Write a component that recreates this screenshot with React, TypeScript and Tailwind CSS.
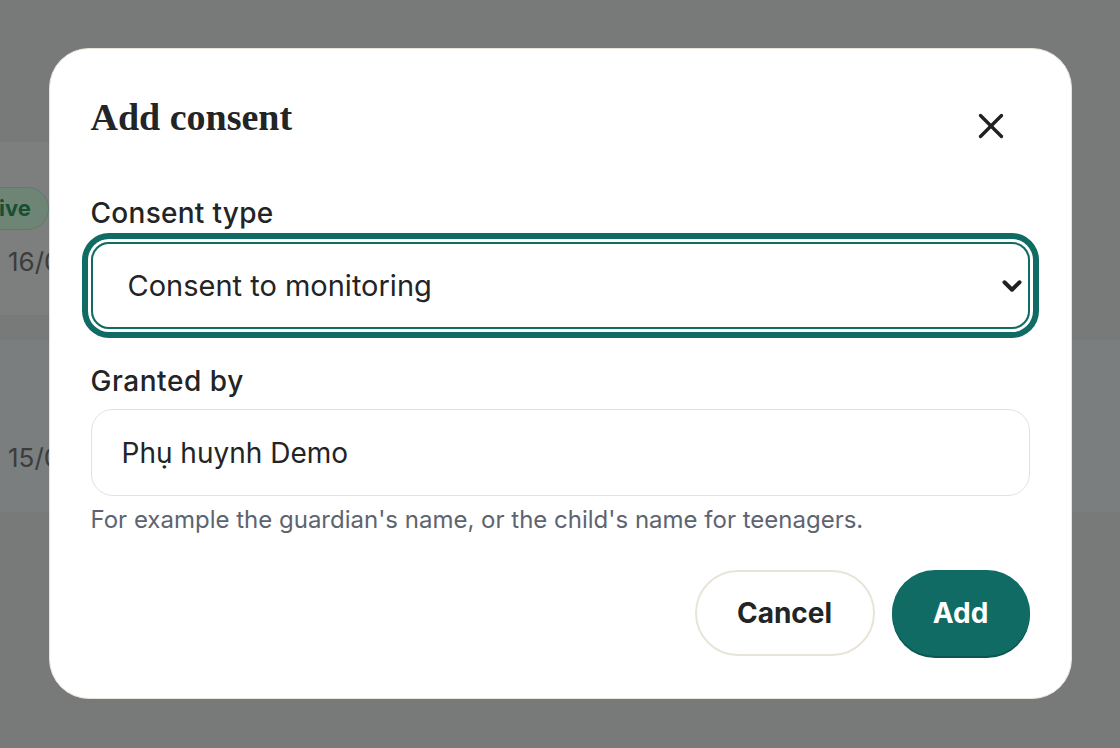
import { X, ChevronDown } from "lucide-react";

const sans = "font-['Inter','Noto_Sans',sans-serif]";

function BackgroundPage() {
  return (
    <div className={`flex flex-col gap-[25px] pt-[142px] ${sans}`}>
      {/* Consent row 1 */}
      <div className="h-[173px] w-[700px] bg-[#7c7f7d] pt-[45px]">
        <span className="-ml-[56px] inline-flex h-[43px] items-center rounded-full border border-[#5f7a69] bg-[#6e8576] px-[17px] text-[22px] font-bold text-[#174f30]">
          Active
        </span>
        <p className="mt-[12px] pl-[8px] text-[26px] text-[#3a3d3c]">16/03/2025</p>
      </div>
      {/* Consent row 2 */}
      <div className="h-[172px] w-full bg-[#7b7e7f] pt-[98px]">
        <p className="pl-[8px] text-[26px] text-[#3a3d3c]">15/03/2025</p>
      </div>
    </div>
  );
}

export default function App() {
  return (
    <div className="relative h-[748px] w-[1120px] overflow-hidden bg-[#777a78]">
      <BackgroundPage />

      {/* Dialog */}
      <div className="absolute inset-0 flex items-start justify-center pt-[48px]">
        <div
          className={`flex h-[651px] w-[1023px] flex-col rounded-[40px] border-[1.5px] border-[#e8e4d8] bg-white px-[41px] pt-[44px] ${sans}`}
        >
          {/* Header */}
          <div className="flex h-[48px] items-start justify-between">
            <h2 className="font-['Liberation_Serif',serif] text-[38px] font-bold leading-[48px] text-[#222425]">
              Add consent
            </h2>
            <button className="mr-[18px] mt-[12px] text-[#1f2122]">
              <X size={42} strokeWidth={1.9} />
            </button>
          </div>

          {/* Consent type */}
          <label className="mt-[56px] text-[28px] font-medium leading-[32px] tracking-[0.01em] text-[#222425]">
            Consent type
          </label>
          <div className="mt-[13px] flex h-[87px] items-center rounded-[18px] border-2 border-[#0f6b63] pl-[35px] pr-[1px] shadow-[0_0_0_3px_#ffffff,0_0_0_9px_#0f6b63]">
            <span className="flex-1 text-[29px] text-[#222425]">Consent to monitoring</span>
            <ChevronDown size={30} strokeWidth={3.2} className="text-[#1f2122]" />
          </div>

          {/* Granted by */}
          <label className="mt-[36px] text-[28px] font-medium leading-[32px] tracking-[0.02em] text-[#222425]">
            Granted by
          </label>
          <div className="mt-[12px] flex h-[87px] items-center rounded-[22px] border-[1.5px] border-[#e6e2d6] pl-[30px]">
            <span className="text-[28px] text-[#222425]">Phụ huynh Demo</span>
          </div>
          <p className="mt-[9px] text-[24px] leading-[30px] text-[#5d6470]">
            For example the guardian's name, or the child's name for teenagers.
          </p>

          {/* Actions */}
          <div className="mt-[35px] flex justify-end gap-[17px]">
            <button className="h-[86px] w-[180px] rounded-full border-2 border-[#e8e4d8] bg-white text-[28px] font-bold text-[#222425]">
              Cancel
            </button>
            <button className="h-[86px] w-[138px] rounded-full bg-[#0f6b63] text-[28px] font-bold text-white shadow-[0_2px_0_#0b5750]">
              Add
            </button>
          </div>
        </div>
      </div>
    </div>
  );
}
